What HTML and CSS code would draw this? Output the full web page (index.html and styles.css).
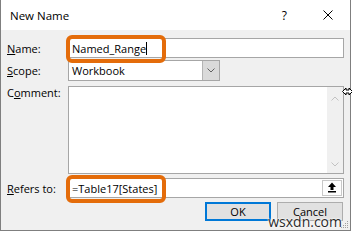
FILE: index.html
```html
<!DOCTYPE html>
<html lang="en">

<head>
    <meta charset="UTF-8">
    <meta name="viewport" content="width=device-width, initial-scale=1.0">
    <title>New Name</title>
    <link rel="stylesheet" href="styles.css">
</head>

<body>
    <div class="dialog">
        <div class="titlebar">
            <span class="title">New Name</span>
            <span class="help">?</span>
            <svg class="close" width="10" height="10" viewBox="0 0 10 10">
                <path d="M0.5 0.5L9.5 9.5M9.5 0.5L0.5 9.5" stroke="#000" stroke-width="1" fill="none" />
            </svg>
        </div>

        <div class="content">
            <div class="row row-name">
                <span class="label"><u>N</u>ame:</span>
                <div class="input">
                    <span class="value">Named_Range</span><span class="caret"></span>
                    <span class="mark"></span>
                </div>
            </div>

            <div class="row row-scope">
                <span class="label"><u>S</u>cope:</span>
                <div class="select">
                    <span class="value">Workbook</span>
                    <span class="drop">
                        <svg width="8" height="5" viewBox="0 0 8 5">
                            <path d="M0.5 0.5L4 4L7.5 0.5" stroke="#606060" fill="none" />
                        </svg>
                    </span>
                </div>
            </div>

            <div class="row row-comment">
                <span class="label">C<u>o</u>mment:</span>
                <div class="textarea">
                    <div class="scrollbar">
                        <svg width="8" height="5" viewBox="0 0 8 5">
                            <path d="M0.5 4.5L4 1L7.5 4.5" stroke="#c2c2c2" fill="none" />
                        </svg>
                        <svg width="8" height="5" viewBox="0 0 8 5">
                            <path d="M0.5 0.5L4 4L7.5 0.5" stroke="#c2c2c2" fill="none" />
                        </svg>
                    </div>
                </div>
            </div>

            <div class="row row-refers">
                <span class="label"><u>R</u>efers to:</span>
                <div class="input">
                    <span class="value">=Table17[States]</span>
                    <span class="collapse">
                        <svg width="10" height="11" viewBox="0 0 10 11">
                            <path d="M5 0.5L1 5H3.5V8H6.5V5H9Z" fill="#000" />
                            <rect x="1" y="9" width="8" height="1.5" fill="#000" />
                        </svg>
                    </span>
                    <span class="mark"></span>
                </div>
            </div>

            <div class="buttons">
                <button class="btn btn-ok">OK</button>
                <button class="btn">Cancel</button>
            </div>
        </div>

        <svg class="grip" width="8" height="8" viewBox="0 0 8 8">
            <rect x="6" y="0" width="1" height="1" fill="#a0a0a0" />
            <rect x="4" y="2" width="1" height="1" fill="#a0a0a0" />
            <rect x="6" y="2" width="1" height="1" fill="#a0a0a0" />
            <rect x="2" y="4" width="1" height="1" fill="#a0a0a0" />
            <rect x="4" y="4" width="1" height="1" fill="#a0a0a0" />
            <rect x="6" y="4" width="1" height="1" fill="#a0a0a0" />
            <rect x="0" y="6" width="1" height="1" fill="#a0a0a0" />
            <rect x="2" y="6" width="1" height="1" fill="#a0a0a0" />
            <rect x="4" y="6" width="1" height="1" fill="#a0a0a0" />
            <rect x="6" y="6" width="1" height="1" fill="#a0a0a0" />
        </svg>

        <svg class="cursor" width="11" height="11" viewBox="0 0 11 11">
            <path d="M0.5 5.5L4 2V4H7V2L10.5 5.5L7 9V7H4V9Z" fill="#fff" stroke="#000" stroke-width="1" />
        </svg>

        <span class="watermark">wsxdn.com</span>
    </div>
</body>

</html>
```

FILE: styles.css
```css
* {
    box-sizing: border-box;
}

body {
    margin: 0;
    background: #fff;
    font-family: "Open Sans", "Noto Sans", sans-serif;
    font-size: 11px;
    color: #000;
}

.dialog {
    position: relative;
    width: 351px;
    height: 231px;
    border: 1px solid #7f7f7f;
    border-top: none;
    background: #f0f0f0;
}

.titlebar {
    height: 30px;
    background: #fff;
    display: flex;
    align-items: center;
    padding-left: 9px;
}

.title {
    flex: 1;
    font-size: 11.5px;
}

.help {
    font-size: 12px;
    margin-right: 36px;
}

.close {
    display: block;
    margin-right: 17px;
}

.content {
    padding: 8px 6px 0 6px;
}

.row {
    display: flex;
    align-items: center;
}

.label {
    width: 61px;
    flex: none;
}

.row-scope {
    margin-top: 2px;
}

.row-comment {
    margin-top: 5px;
    align-items: flex-start;
}

.row-comment .label {
    margin-top: -1px;
}

.row-refers {
    margin-top: 4px;
}

.input {
    position: relative;
    width: 276px;
    height: 20px;
    border: 1px solid #a6a6a6;
    background: #fff;
    padding-left: 3px;
    display: flex;
    align-items: center;
}

.caret {
    width: 1px;
    height: 13px;
    background: #000;
}

.mark {
    position: absolute;
    left: -3px;
    top: -4px;
    width: 100px;
    height: 28px;
    border: 4px solid #e46c0a;
    border-radius: 6px;
}

.select {
    width: 152px;
    height: 21px;
    border: 1px solid #a6a6a6;
    background: #fff;
    padding-left: 3px;
    display: flex;
    align-items: center;
}

.select .value {
    flex: 1;
}

.drop {
    width: 17px;
    height: 19px;
    background: #dadada;
    border-left: 1px solid #b4b4b4;
    display: flex;
    align-items: center;
    justify-content: center;
}

.textarea {
    width: 276px;
    height: 88px;
    border: 1px solid #a6a6a6;
    background: #fff;
    display: flex;
    justify-content: flex-end;
}

.scrollbar {
    width: 16px;
    background: #f0f0f0;
    display: flex;
    flex-direction: column;
    align-items: center;
    justify-content: space-between;
    padding: 9px 0 6px 0;
}

.scrollbar svg {
    display: block;
}

.row-refers .value {
    flex: 1;
}

.collapse {
    width: 20px;
    height: 16px;
    margin-right: 1px;
    margin-top: -1px;
    border: 1px solid #c8c8c8;
    background: #fdfdfd;
    display: flex;
    align-items: center;
    justify-content: center;
}

.buttons {
    margin-top: 4px;
    display: flex;
    justify-content: flex-end;
    gap: 6px;
    padding-right: 1px;
}

.btn {
    width: 66px;
    height: 19px;
    padding: 0;
    border: 1px solid #adadad;
    background: #e1e1e1;
    font-family: inherit;
    font-size: 11px;
    color: #000;
}

.btn-ok {
    border: 2px solid #0078d7;
}

.grip {
    position: absolute;
    right: 1px;
    bottom: 1px;
}

.cursor {
    position: absolute;
    left: 341px;
    top: 86px;
}

.watermark {
    position: absolute;
    right: 8px;
    bottom: 0;
    font-size: 14px;
    line-height: 16px;
    color: #2b2b2b;
    text-shadow: 0 0 2px #fff, 0 0 2px #fff, 0 0 1px #fff;
}
```
